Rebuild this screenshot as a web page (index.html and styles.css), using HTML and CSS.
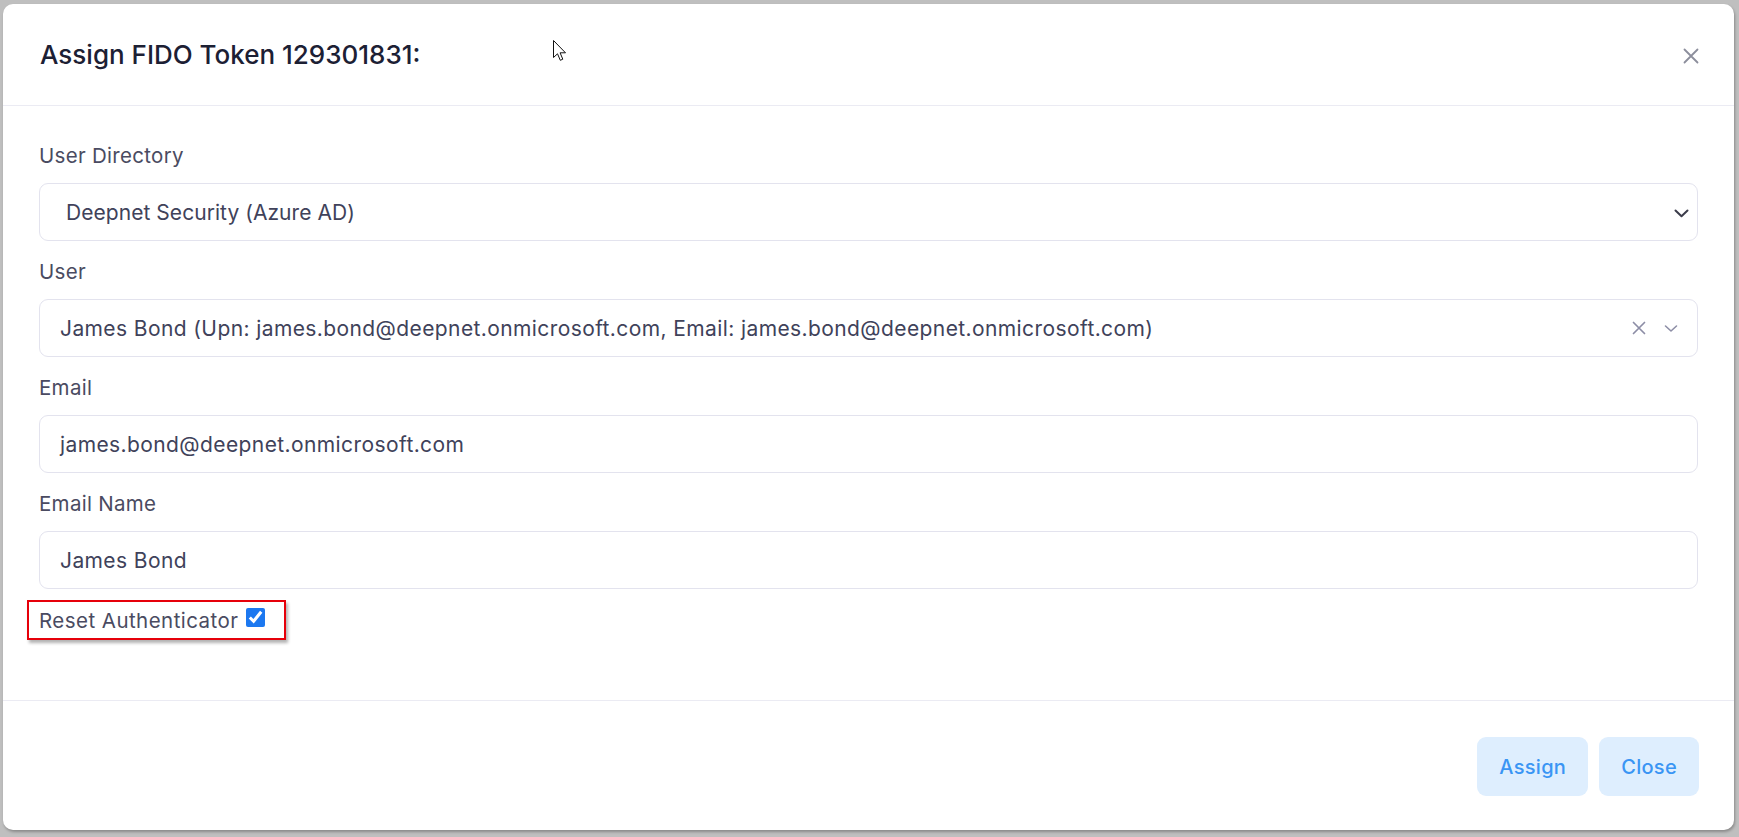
FILE: index.html
```html
<!DOCTYPE html>
<html lang="en">
<head>
<meta charset="utf-8">
<title>Assign FIDO Token</title>
<link rel="stylesheet" href="styles.css">
</head>
<body>
<div class="backdrop">
  <div class="modal">
    <div class="modal-header">
      <h2 class="modal-title">Assign FIDO Token 129301831:</h2>
      <button class="close-btn" aria-label="Close">
        <svg width="16" height="16" viewBox="0 0 16 16"><path d="M1.5 1.5 L14.5 14.5 M14.5 1.5 L1.5 14.5" stroke="#8c8e9c" stroke-width="1.8" stroke-linecap="round" fill="none"/></svg>
      </button>
    </div>
    <div class="modal-body">
      <div class="field">
        <label class="field-label">User Directory</label>
        <div class="control select-control">
          <span class="value value-indent">Deepnet Security (Azure AD)</span>
          <svg class="chev-dark" width="15" height="9" viewBox="0 0 15 9"><path d="M1.5 1.5 L7.5 7.3 L13.5 1.5" stroke="#3b3c4a" stroke-width="2" fill="none" stroke-linecap="round" stroke-linejoin="round"/></svg>
        </div>
      </div>
      <div class="field">
        <label class="field-label">User</label>
        <div class="control user-control">
          <span class="value">James Bond (Upn: james.bond@deepnet.onmicrosoft.com, Email: james.bond@deepnet.onmicrosoft.com)</span>
          <span class="indicators">
            <svg width="14" height="14" viewBox="0 0 14 14"><path d="M1.5 1.5 L12.5 12.5 M12.5 1.5 L1.5 12.5" stroke="#8d8ea6" stroke-width="1.7" fill="none" stroke-linecap="round"/></svg>
            <svg width="14" height="9" viewBox="0 0 14 9"><path d="M1.5 2 L7 7 L12.5 2" stroke="#8d8ea6" stroke-width="1.6" fill="none" stroke-linecap="round" stroke-linejoin="round"/></svg>
          </span>
        </div>
      </div>
      <div class="field">
        <label class="field-label">Email</label>
        <div class="control"><span class="value">james.bond@deepnet.onmicrosoft.com</span></div>
      </div>
      <div class="field">
        <label class="field-label">Email Name</label>
        <div class="control"><span class="value">James Bond</span></div>
      </div>
      <label class="check-row">
        <span class="check-text">Reset Authenticator</span>
        <input class="check" type="checkbox" checked>
      </label>
    </div>
    <div class="modal-footer">
      <button class="btn">Assign</button>
      <button class="btn">Close</button>
    </div>
  </div>
  <svg class="cursor" width="14" height="22" viewBox="0 0 14 22"><path d="M0.5 0.5 L0.5 17.5 L4.5 13.8 L7.3 20.3 L9.8 19.2 L7.1 12.8 L12.5 12.8 Z" fill="#ffffff" stroke="#111111" stroke-width="1" stroke-linejoin="miter"/></svg>
</div>
</body>
</html>
```
FILE: styles.css
```css
* { box-sizing: border-box; }
html, body { margin: 0; padding: 0; }
body {
  font-family: "Inter", "Open Sans", "Liberation Sans", sans-serif;
  background: #bfbfbf;
}
.backdrop {
  position: relative;
  width: 1739px;
  height: 837px;
  padding: 4px 5px 7px 3px;
  background: #bfbfbf;
}
.modal {
  height: 100%;
  background: #ffffff;
  border-radius: 10px;
  display: flex;
  flex-direction: column;
  box-shadow: 1px 2px 3px rgba(0,0,0,0.28);
}
.modal-header {
  height: 102px;
  flex: 0 0 auto;
  display: flex;
  align-items: center;
  justify-content: space-between;
  padding: 0 35px 0 37px;
  border-bottom: 1px solid #ebebf3;
}
.modal-title {
  margin: 0;
  font-size: 26px;
  font-weight: 500;
  color: #1c2034;
  letter-spacing: 0;
}
.close-btn {
  border: none;
  background: none;
  padding: 0;
  width: 16px;
  height: 16px;
  display: flex;
  margin-top: 2px;
}
.modal-body {
  flex: 1 1 auto;
  padding: 30px 36px 0 36px;
}
.field { padding-top: 8px; margin-bottom: 11px; }
.field-label {
  display: block;
  margin-bottom: 15px;
  font-size: 20.5px;
  line-height: 24px;
  letter-spacing: 0.3px;
  color: #4a4b61;
}
.control {
  height: 58px;
  border: 1px solid #e3e3ee;
  border-radius: 9px;
  display: flex;
  align-items: center;
  padding: 0 20px;
  font-size: 21px;
  letter-spacing: 0.4px;
  color: #40425a;
}
.value { flex: 1 1 auto; white-space: nowrap; }
.value-indent { padding-left: 6px; letter-spacing: 0.05px; }
.select-control { padding-right: 8px; }
.chev-dark { flex: 0 0 auto; margin-top: 2px; }
.user-control { padding-right: 19px; }
.indicators {
  display: flex;
  align-items: center;
  gap: 18px;
}
.check-row {
  display: inline-flex;
  align-items: flex-start;
  margin-left: -12px;
  border: 2px solid #e6000a;
  padding: 7px 19px 5px 10px;
  box-shadow: 2px 3px 3px rgba(0,0,0,0.3);
  cursor: pointer;
}
.check-text {
  font-size: 20.5px;
  line-height: 24px;
  letter-spacing: 0.45px;
  color: #4a4b61;
}
.check {
  width: 19px;
  height: 19px;
  margin: -1px 0 0 8px;
  accent-color: #1c78f0;
}
.modal-footer {
  flex: 0 0 auto;
  border-top: 1px solid #ebebf3;
  padding: 36px 35px 34px;
  display: flex;
  justify-content: flex-end;
  gap: 11px;
}
.btn {
  height: 59px;
  padding: 0 22px;
  border: none;
  border-radius: 9px;
  background: #deeefe;
  color: #3a95f4;
  font-family: "Inter", "Open Sans", "Liberation Sans", sans-serif;
  font-size: 20px;
  font-weight: 500;
  letter-spacing: 0.3px;
}
.cursor {
  position: absolute;
  left: 553px;
  top: 40px;
}
```
